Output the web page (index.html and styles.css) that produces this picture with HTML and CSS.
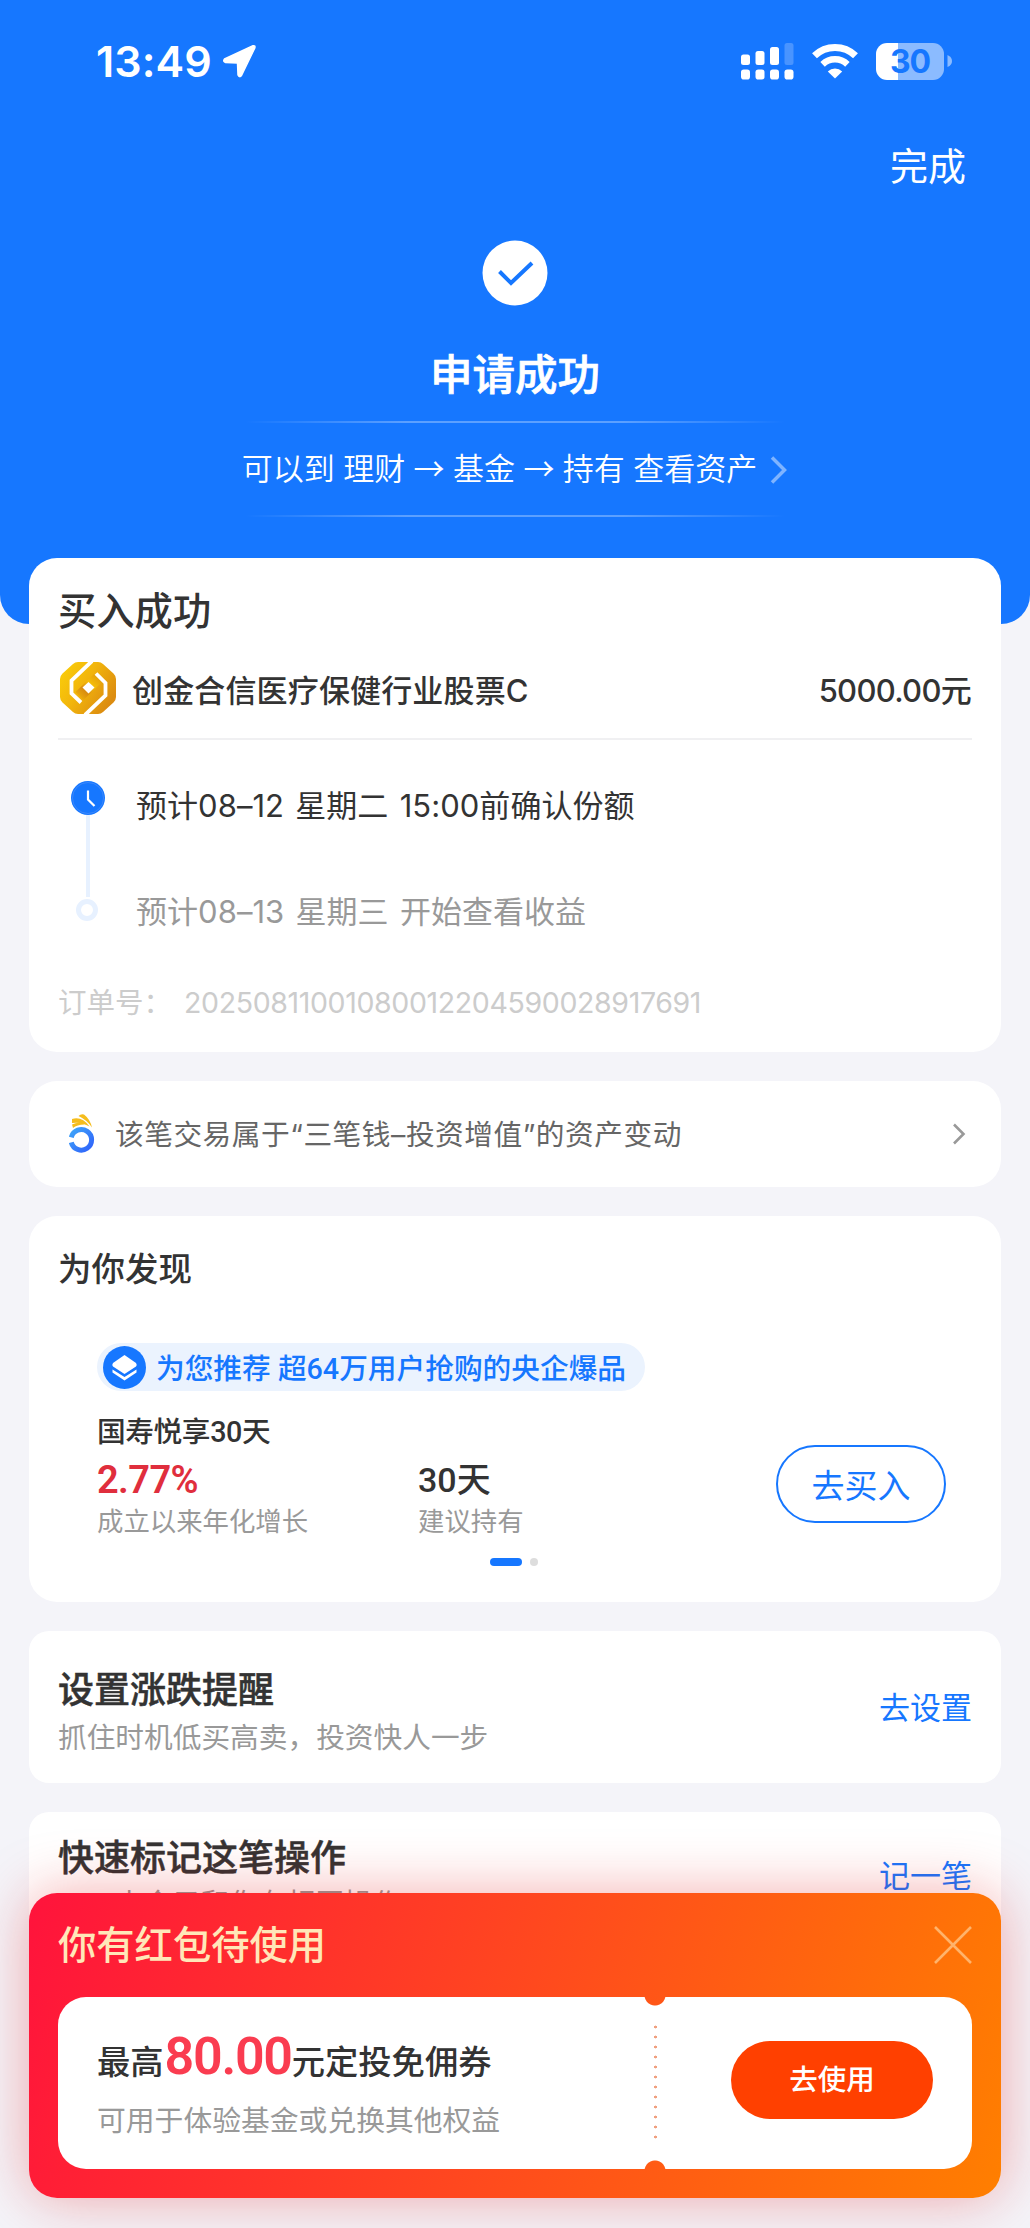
FILE: index.html
```html
<!DOCTYPE html>
<html lang="zh-CN">
<head>
<meta charset="utf-8">
<title>申请成功</title>
<link rel="stylesheet" href="styles.css">
</head>
<body>
<div class="screen">
  <header class="hero">
    <div class="status">
      <div class="status-left">
        <span class="time">13:49</span>
        <svg class="loc" width="34" height="34" viewBox="0 0 34 34"><path d="M31 1.800 L2.500 15 Q0.500 17.500 3.500 18.500 L15.500 19 L16 31 Q17.500 34 19.500 31.500 L32.800 4 Q33.500 1.200 31 1.800Z" fill="#fff" stroke="#fff" stroke-width="1.500" stroke-linejoin="round"/></svg>
      </div>
      <div class="status-right">
        <svg width="53" height="37" viewBox="0 0 53 37" fill="#fff">
          <rect x="0" y="11.500" width="9" height="10.500" rx="2.500"/><rect x="14.500" y="8" width="9" height="14" rx="2.500"/><rect x="29" y="4" width="9" height="18" rx="2.500"/><rect x="43.500" y="0" width="9" height="22" rx="2.500" opacity=".22"/>
          <rect x="0" y="26.500" width="9" height="10" rx="2.800"/><rect x="14.500" y="26.500" width="9" height="10" rx="2.800"/><rect x="29" y="26.500" width="9" height="10" rx="2.800"/><rect x="43.500" y="26.500" width="9" height="10" rx="2.800"/>
        </svg>
        <svg class="wifi" width="46" height="35" viewBox="0 0 46 35" fill="none">
          <path d="M2.500 11.800 A29.500 29.500 0 0 1 43.500 11.800" stroke="#fff" stroke-width="7"/>
          <path d="M10.600 20.300 A18 18 0 0 1 35.400 20.300" stroke="#fff" stroke-width="6.500"/>
          <path d="M23 34.500 L15.800 27.400 A10.500 10.500 0 0 1 30.200 27.400Z" fill="#fff"/>
        </svg>
        <div class="battery"><span>30</span></div>
        <svg width="6" height="12" viewBox="0 0 6 12"><path d="M0.500 0 Q5 2 5 6 Q5 10 0.500 12Z" fill="#fff" opacity=".5"/></svg>
      </div>
    </div>
    <div class="done">完成</div>
    <svg class="check" width="66" height="66" viewBox="0 0 66 66"><circle cx="33" cy="33" r="32.500" fill="#fff"/><path d="M17.500 31.500 L29 43 L50 23" fill="none" stroke="#1677ff" stroke-width="4"/></svg>
    <h1>申请成功</h1>
    <div class="path">
      <span>可以到 理财 → 基金 → 持有 查看资产</span>
      <svg width="18" height="28" viewBox="0 0 18 28"><path d="M2 1.500 L14.500 14 L2 26.500" fill="none" stroke="#fff" stroke-width="3.500" opacity=".45"/></svg>
    </div>
  </header>

  <main>
    <section class="card order">
      <h2>买入成功</h2>
      <div class="fund">
        <svg width="56" height="52" viewBox="0 0 56 52">
          <defs>
            <linearGradient id="gold" x1="0" y1="0" x2="1" y2="0.600"><stop offset="0" stop-color="#fbd109"/><stop offset=".5" stop-color="#f2b50c"/><stop offset="1" stop-color="#dc8c10"/></linearGradient>
            <linearGradient id="goldDark" x1="0" y1="1" x2="1" y2="0"><stop offset="0" stop-color="#f5bd08"/><stop offset=".35" stop-color="#d98c10"/><stop offset=".6" stop-color="#f5bd08"/><stop offset="1" stop-color="#dd930e"/></linearGradient>
          </defs>
          <path d="M18 0 H38 Q41 0 43 2 L53.500 11.500 Q56 14 56 17 V35 Q56 38 53.500 40.500 L43 50 Q41 52 38 52 H18 Q15 52 13 50 L2.500 40.500 Q0 38 0 35 V17 Q0 14 2.500 11.500 L13 2 Q15 0 18 0Z" fill="url(#gold)"/>
          <path d="M15.500 30 L34 12 L42 20 L23.500 38Z" fill="url(#goldDark)"/>
          <path d="M32 -1 L11.500 18.500 V31.500 L21 40.500" fill="none" stroke="#fff" stroke-width="3.800"/>
          <path d="M25 53 L45.500 33.500 V21 L36 11.500" fill="none" stroke="#fff" stroke-width="3.800"/>
          <path d="M28.500 20 L34.500 25.500 L28.500 31.500 L22.500 25.500Z" fill="#fff"/>
        </svg>
        <span class="fund-name">创金合信医疗保健行业股票C</span>
        <span class="amount">5000.00元</span>
      </div>
      <div class="steps">
        <div class="rail"><svg width="34" height="34" viewBox="0 0 34 34"><circle cx="17" cy="17" r="17" fill="#1677ff"/><circle cx="17" cy="17" r="15.500" fill="none" stroke="#3a87fc" stroke-width="1"/><path d="M17 9.500 V18.500 L23.500 25" fill="none" stroke="#fff" stroke-width="2.200"/></svg><i class="rail-line"></i><i class="ring"></i></div>
        <div class="step-text"><p>预计08–12 星期二 15:00前确认份额</p><p class="later">预计08–13 星期三 开始查看收益</p></div>
      </div>
      <div class="order-no"><span>订单号：</span><span class="digits">20250811001080012204590028917691</span></div>
    </section>

    <section class="card notice">
      <svg width="26" height="40" viewBox="0 0 26 40">
        <defs><linearGradient id="ringBlue" x1="0" y1="0" x2="1" y2="1"><stop offset="0" stop-color="#3fa4f8"/><stop offset="1" stop-color="#2f62fb"/></linearGradient></defs>
        <path d="M2.300 23.300 A10.300 10.300 0 1 1 2.300 28.300" fill="none" stroke="url(#ringBlue)" stroke-width="5"/>
        <path d="M9.500 2 Q12 -0.500 15 0.500 Q21 5 23 13.500 Q18 6 9.500 2Z M3 5 Q13 2 20.500 12.500 Q12 7.500 3 9Z M3 10.500 Q10 7 15.500 10.500 Q8 10.500 4 14Z" fill="#f5bd1d"/>
      </svg>
      <span>该笔交易属于“三笔钱–投资增值”的资产变动</span>
      <svg class="go" width="14" height="22" viewBox="0 0 14 22"><path d="M2 1.500 L11.500 11 L2 20.500" fill="none" stroke="#999" stroke-width="2.600"/></svg>
    </section>

    <section class="card discover">
      <h3>为你发现</h3>
      <div class="pill">
        <svg width="43" height="43" viewBox="0 0 43 43"><circle cx="21.500" cy="21.500" r="21.500" fill="#1677ff"/><path d="M21.500 9 L33 17 Q34.500 19 33 20.500 L21.500 28 L10 20.500 Q8.500 19 10 17Z" fill="#fff"/><path d="M9.500 23.500 L21.500 31 L33.500 23.500 V26.500 L21.500 34.500 L9.500 26.500Z" fill="#fff"/></svg>
        <span>为您推荐 超64万用户抢购的央企爆品</span>
      </div>
      <div class="product">
        <div class="product-info">
          <div class="product-name">国寿悦享30天</div>
          <div class="stats">
            <div class="stat"><b class="rate">2.77%</b><small>成立以来年化增长</small></div>
            <div class="stat"><b class="days">30天</b><small>建议持有</small></div>
          </div>
        </div>
        <a class="buy">去买入</a>
      </div>
      <div class="dots"><i></i><i></i></div>
    </section>

    <section class="card action">
      <div><h4>设置涨跌提醒</h4><p>抓住时机低买高卖，投资快人一步</p></div>
      <a>去设置</a>
    </section>

    <section class="card action tight">
      <div><h4>快速标记这笔操作</h4><p><span class="count">999+</span>小金子和你有相同操作</p></div>
      <a>记一笔</a>
    </section>
  </main>

  <aside class="sheet">
    <div class="sheet-head">
      <span>你有红包待使用</span>
      <svg width="38" height="38" viewBox="0 0 38 38"><path d="M1 1 L37 37 M37 1 L1 37" stroke="#ffb36b" stroke-width="2.600"/></svg>
    </div>
    <div class="ticket">
      <div class="coupon">
        <p class="offer">最高<b>80.00</b>元定投免佣券</p>
        <p class="terms">可用于体验基金或兑换其他权益</p>
      </div>
      <div class="tear"><i></i></div>
      <div class="use-wrap"><a class="use">去使用</a></div>
    </div>
  </aside>
</div>
</body>
</html>
```
FILE: styles.css
```css
* { box-sizing: border-box; margin: 0; padding: 0; }
body { background: #f4f4f9; }
svg { display: block; flex: none; }
i { display: block; }

.screen {
  position: relative;
  width: 1030px;
  height: 2228px;
  overflow: hidden;
  font-family: Inter, "Noto Sans CJK SC", sans-serif;
  color: #333;
  white-space: nowrap;
}

/* Blue header */
.hero {
  height: 624px;
  background: #1677ff;
  border-radius: 0 0 29px 29px;
  color: #fff;
  display: flex;
  flex-direction: column;
  align-items: center;
}
.status {
  width: 100%;
  height: 122px;
  padding: 0 77px 0 96px;
  display: flex;
  justify-content: space-between;
  align-items: center;
}
.status-left, .status-right { display: flex; align-items: center; }
.time { font-size: 43px; font-weight: 600; letter-spacing: .1px; }
.loc { margin-left: 10px; }
.wifi { margin-left: 18px; }
.battery {
  width: 68px;
  height: 37px;
  margin: 0 3px 0 18px;
  border-radius: 11px;
  background: linear-gradient(90deg, #fff 21.5px, #8bbbff 21.5px);
  color: #1677ff;
  font-size: 32px;
  font-weight: 700;
  line-height: 37px;
  text-align: center;
}
.battery span { letter-spacing: -1px; }
.done {
  align-self: flex-end;
  height: 84px;
  margin-right: 64px;
  line-height: 88px;
  font-size: 38px;
}
.check { margin-top: 34px; }
h1 {
  margin-top: 33px;
  font-size: 42.500px;
  font-weight: 500;
  line-height: 72px;
  -webkit-text-stroke: .7px currentColor;
}
.path {
  width: 540px;
  height: 96px;
  margin-top: 10px;
  display: flex;
  align-items: center;
  justify-content: center;
  gap: 13px;
  font-family: "Noto Sans CJK SC", sans-serif;
  font-size: 31px;
  font-weight: 350;
  word-spacing: 1.500px;
  background:
    linear-gradient(90deg, transparent, rgba(255,255,255,.3) 30%, rgba(255,255,255,.3) 70%, transparent) top / 100% 2px no-repeat,
    linear-gradient(90deg, transparent, rgba(255,255,255,.3) 30%, rgba(255,255,255,.3) 70%, transparent) bottom / 100% 2px no-repeat;
}
.path span { line-height: 50px; margin-top: -5px; }
.path svg { margin-top: 1px; }

/* Cards */
main {
  margin-top: -66px;
  padding: 0 29px;
  display: flex;
  flex-direction: column;
  gap: 29px;
}
.card { background: #fff; border-radius: 28px; padding: 0 29px; }

.order { height: 494px; }
h2 { padding-top: 26px; height: 92px; font-size: 38.300px; font-weight: 500; line-height: 54px; }
.fund {
  height: 90px;
  padding: 0 1px 12px 2px;
  border-bottom: 2px solid #f0f0f2;
  display: flex;
  align-items: center;
  font-size: 31px;
  font-weight: 500;
}
.fund-name { margin-left: 16px; letter-spacing: .15px; }
.amount { margin-left: auto; letter-spacing: -.7px; }
.steps { display: flex; height: 222px; padding: 41px 0 0 13px; }
.rail { width: 34px; display: flex; flex-direction: column; align-items: center; }
.rail-line { width: 4px; height: 82px; background: #e7f1ff; }
.ring { width: 22px; height: 22px; margin: 2px 2px 0 0; border: 5.500px solid #e7f1ff; border-radius: 50%; }
.step-text { margin-left: 31px; font-size: 31px; word-spacing: 2.500px; letter-spacing: .04px; }
.step-text p { height: 106px; line-height: 50px; }
.step-text .later { color: #999; }
.order-no { display: flex; font-size: 28.500px; line-height: 81px; color: #ccc; }
.digits { margin-left: 12px; letter-spacing: -.36px; }

.notice {
  height: 106px;
  padding: 0 35px 0 40px;
  display: flex;
  align-items: center;
  font-size: 28.700px;
  color: #666;
}
.notice span { margin: -4px 0 0 20px; letter-spacing: .52px; }
.go { margin-left: auto; }

.discover { height: 386px; }
h3 { padding-top: 26px; height: 127px; font-size: 33.500px; font-weight: 500; line-height: 54px; }
.pill {
  width: 548px;
  height: 48px;
  margin-left: 39px;
  padding-left: 6px;
  border-radius: 24px;
  background: #ebf3fe;
  display: flex;
  align-items: center;
  gap: 10px;
  color: #1677ff;
  font-size: 28.700px;
  font-weight: 500;
  font-family: Roboto, "Noto Sans CJK SC", sans-serif;
}
.pill span { margin-top: -2px; }
.product { display: flex; padding: 21px 26px 0 39px; justify-content: space-between; font-family: Roboto, "Noto Sans CJK SC", sans-serif; }
.product-name { font-size: 28.700px; font-weight: 500; line-height: 40px; letter-spacing: -.4px; }
.stats { display: flex; }
.stat { width: 321px; }
.stat b { display: block; height: 52px; line-height: 56px; font-weight: 500; font-size: 34px; }
.stat .rate { font-size: 38px; font-weight: 600; letter-spacing: -.6px; color: #e02e3d; }
.stat small { display: block; font-size: 26.400px; line-height: 36px; color: #999; }
.buy {
  width: 170px;
  height: 78px;
  margin-top: 33px;
  border: 2.500px solid #1677ff;
  border-radius: 39px;
  color: #1677ff;
  font-size: 33px;
  line-height: 79px;
  text-align: center;
}
.dots { display: flex; justify-content: center; gap: 8px; padding: 18px 2px 0 0; }
.dots i { width: 8px; height: 8px; border-radius: 4px; background: #ddd; }
.dots i:first-child { width: 32px; background: #1677ff; }

.action {
  height: 152px;
  border-radius: 20px;
  padding-top: 34px;
  display: flex;
  justify-content: space-between;
}
.action h4 { font-size: 36px; font-weight: 500; line-height: 50px; -webkit-text-stroke: .5px currentColor; }
.action p { font-size: 28.700px; line-height: 46px; color: #999; }
.action a { font-size: 31px; line-height: 86px; color: #1677ff; }
.action.tight { padding-top: 21px; }
.tight p { line-height: 42px; }
.count { font-family: Roboto, sans-serif; letter-spacing: -2px; }

/* Coupon sheet floating over the list */
.sheet {
  position: absolute;
  left: 29px;
  right: 29px;
  bottom: 30px;
  height: 305px;
  padding: 0 29px;
  border-radius: 28px;
  background: linear-gradient(107deg, #ff133c, #ff7f00);
  box-shadow: 0 0 58px rgba(225, 20, 20, .35);
}
.sheet-head {
  height: 104px;
  display: flex;
  align-items: center;
  justify-content: space-between;
  font-size: 38.300px;
  font-weight: 500;
  color: #ffe7b8;
}
.sheet-head span { margin-top: -6px; }
.ticket {
  height: 172px;
  border-radius: 28px;
  display: flex;
  background:
    radial-gradient(circle at 597px -2px, transparent 10px, #fff 11px) top / 100% 50% no-repeat,
    radial-gradient(circle at 597px 88px, transparent 10px, #fff 11px) bottom / 100% 50% no-repeat;
}
.coupon { width: 596px; padding: 30px 0 0 39px; }
.offer { font-size: 33.300px; font-weight: 500; line-height: 70px; color: #333; }
.offer b { font: 600 52px/50px Roboto, sans-serif; color: #fa3c50; letter-spacing: -1.300px; padding-left: 1px; }
.terms { font-size: 28.800px; line-height: 48px; color: #999; }
.tear { width: 3px; padding: 25px 0; }
.tear i { height: 122px; background: radial-gradient(circle, #f0a080 1.200px, transparent 1.700px) 0 0 / 3px 10px; }
.use-wrap { flex: 1; display: flex; align-items: center; justify-content: flex-end; padding-right: 39px; }
.use {
  width: 202px;
  height: 78px;
  margin-top: -6px;
  border-radius: 39px;
  background: #ff4000;
  color: #fff;
  font-size: 28.500px;
  font-weight: 500;
  line-height: 78px;
  text-align: center;
}
```
